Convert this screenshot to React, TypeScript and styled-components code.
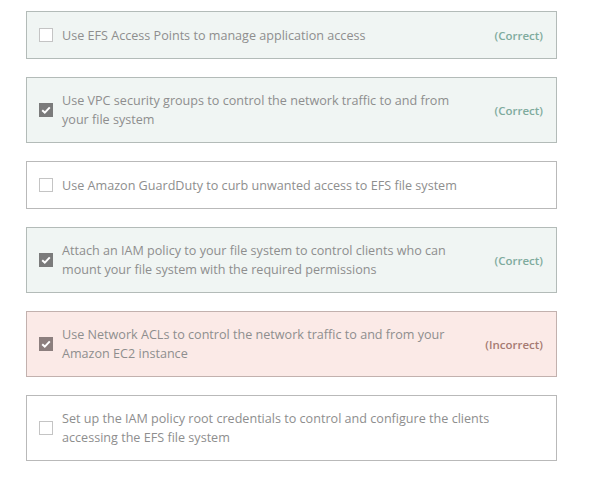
import styled, { createGlobalStyle } from "styled-components";

const GlobalStyle = createGlobalStyle`
  body {
    margin: 0;
    background: #fff;
    font-family: "Open Sans", "Noto Sans", sans-serif;
  }
`;

type Status = "correct" | "incorrect" | "none";

const palette = {
  correct: { bg: "#f0f5f3", border: "#b3bbb8", label: "#7fab9d", box: "#7b7b7b" },
  incorrect: { bg: "#fbeae7", border: "#c2b1ae", label: "#a67b72", box: "#8c7f7e" },
  none: { bg: "#ffffff", border: "#b9b9b9", label: "#888", box: "#7b7b7b" },
};

const List = styled.div`
  display: flex;
  flex-direction: column;
  gap: 18px;
  width: 531px;
  padding: 11px 0 0 26px;
`;

const Option = styled.div<{ $status: Status }>`
  display: flex;
  align-items: center;
  box-sizing: border-box;
  min-height: 48px;
  padding: 13px 13px 13px 12px;
  background: ${(p) => palette[p.$status].bg};
  border: 1px solid ${(p) => palette[p.$status].border};
`;

const Box = styled.span<{ $checked: boolean; $status: Status }>`
  flex: none;
  width: 14px;
  height: 14px;
  box-sizing: border-box;
  display: flex;
  align-items: center;
  justify-content: center;
  margin-right: 9px;
  background: ${(p) => (p.$checked ? palette[p.$status].box : "#fff")};
  border: 1px solid ${(p) => (p.$checked ? palette[p.$status].box : "#c4c4c4")};
`;

const Text = styled.span<{ $hasLabel: boolean }>`
  flex: 1;
  max-width: ${(p) => (p.$hasLabel ? "396px" : "none")};
  font-size: 12.6px;
  line-height: 19px;
  color: #8e8e8e;
`;

const Label = styled.span<{ $status: Status }>`
  margin-left: auto;
  font-size: 11.5px;
  font-weight: 600;
  color: ${(p) => palette[p.$status].label};
`;

const Check = () => (
  <svg width="10" height="8" viewBox="0 0 10 8">
    <path d="M1.2 4.2 L3.8 6.6 L8.8 1.4" fill="none" stroke="#fff" strokeWidth="2" />
  </svg>
);

const options: { text: string; checked: boolean; status: Status }[] = [
  { text: "Use EFS Access Points to manage application access", checked: false, status: "correct" },
  { text: "Use VPC security groups to control the network traffic to and from your file system", checked: true, status: "correct" },
  { text: "Use Amazon GuardDuty to curb unwanted access to EFS file system", checked: false, status: "none" },
  { text: "Attach an IAM policy to your file system to control clients who can mount your file system with the required permissions", checked: true, status: "correct" },
  { text: "Use Network ACLs to control the network traffic to and from your Amazon EC2 instance", checked: true, status: "incorrect" },
  { text: "Set up the IAM policy root credentials to control and configure the clients accessing the EFS file system", checked: false, status: "none" },
];

export default function App() {
  return (
    <>
      <GlobalStyle />
      <List>
        {options.map((o) => (
          <Option key={o.text} $status={o.status}>
            <Box $checked={o.checked} $status={o.status}>
              {o.checked && <Check />}
            </Box>
            <Text $hasLabel={o.status !== "none"}>{o.text}</Text>
            {o.status !== "none" && (
              <Label $status={o.status}>
                {o.status === "correct" ? "(Correct)" : "(Incorrect)"}
              </Label>
            )}
          </Option>
        ))}
      </List>
    </>
  );
}
